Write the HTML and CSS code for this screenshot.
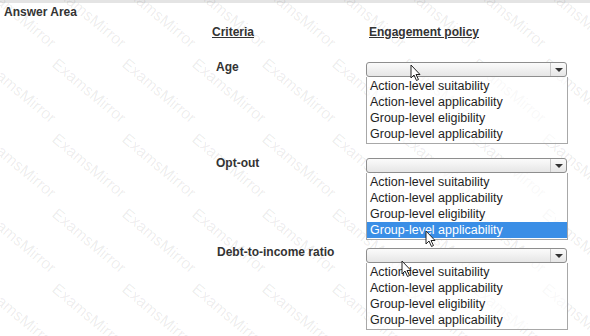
FILE: index.html
```html
<!DOCTYPE html>
<html>
<head>
<meta charset="utf-8">
<link rel="stylesheet" href="styles.css">
</head>
<body>
<div class="page">
  <div class="topband"></div>
  <div class="title">Answer Area</div>
  <div class="table">
    <div class="head">Criteria</div>
    <div class="head">Engagement policy</div>

    <div class="label row1">Age</div>
    <div class="field row1">
      <div class="select"><span class="arrow"></span></div>
      <ul class="list">
        <li>Action-level suitability</li>
        <li>Action-level applicability</li>
        <li>Group-level eligibility</li>
        <li>Group-level applicability</li>
      </ul>
    </div>

    <div class="label row2">Opt-out</div>
    <div class="field row2">
      <div class="select"><span class="arrow"></span></div>
      <ul class="list">
        <li>Action-level suitability</li>
        <li>Action-level applicability</li>
        <li>Group-level eligibility</li>
        <li class="sel">Group-level applicability</li>
      </ul>
    </div>

    <div class="label row3">Debt-to-income ratio</div>
    <div class="field row3">
      <div class="select"><span class="arrow"></span></div>
      <ul class="list">
        <li>Action-level suitability</li>
        <li>Action-level applicability</li>
        <li>Group-level eligibility</li>
        <li>Group-level applicability</li>
      </ul>
    </div>
  </div>

  <div class="watermarks">
    <span>ExamsMirror</span><span>ExamsMirror</span><span>ExamsMirror</span><span>ExamsMirror</span><span>ExamsMirror</span><span>ExamsMirror</span><span>ExamsMirror</span><span>ExamsMirror</span><span>ExamsMirror</span>
    <span>ExamsMirror</span><span>ExamsMirror</span><span>ExamsMirror</span><span>ExamsMirror</span><span>ExamsMirror</span><span>ExamsMirror</span><span>ExamsMirror</span><span>ExamsMirror</span><span>ExamsMirror</span>
    <span>ExamsMirror</span><span>ExamsMirror</span><span>ExamsMirror</span><span>ExamsMirror</span><span>ExamsMirror</span><span>ExamsMirror</span><span>ExamsMirror</span><span>ExamsMirror</span><span>ExamsMirror</span>
    <span>ExamsMirror</span><span>ExamsMirror</span><span>ExamsMirror</span><span>ExamsMirror</span><span>ExamsMirror</span><span>ExamsMirror</span><span>ExamsMirror</span><span>ExamsMirror</span><span>ExamsMirror</span>
    <span>ExamsMirror</span><span>ExamsMirror</span><span>ExamsMirror</span><span>ExamsMirror</span><span>ExamsMirror</span><span>ExamsMirror</span><span>ExamsMirror</span><span>ExamsMirror</span><span>ExamsMirror</span>
  </div>

  <svg class="cursor c1" width="12" height="18" viewBox="0 0 12 18"><path d="M1 1 L1 14 L4 11 L6.5 16.5 L8.5 15.5 L6 10.5 L10 10.5 Z" fill="#fff" stroke="#222" stroke-width="1"/></svg>
  <svg class="cursor c2" width="12" height="18" viewBox="0 0 12 18"><path d="M1 1 L1 14 L4 11 L6.5 16.5 L8.5 15.5 L6 10.5 L10 10.5 Z" fill="#fff" stroke="#222" stroke-width="1"/></svg>
  <svg class="cursor c3" width="12" height="18" viewBox="0 0 12 18"><path d="M1 1 L1 14 L4 11 L6.5 16.5 L8.5 15.5 L6 10.5 L10 10.5 Z" fill="#fff" stroke="#222" stroke-width="1"/></svg>
</div>
</body>
</html>
```

FILE: styles.css
```css
html, body {
  margin: 0;
  padding: 0;
  background: #fff;
}
.page {
  position: relative;
  width: 590px;
  height: 336px;
  overflow: hidden;
  font-family: "Liberation Sans", Arial, sans-serif;
  color: #222;
}
.topband {
  height: 3px;
  background: #e4e4e4;
}
.title {
  font-size: 12px;
  font-weight: bold;
  color: #333;
  padding: 2px 0 0 4px;
  line-height: 14px;
  position: relative;
  z-index: 2;
}
.table {
  display: grid;
  grid-template-columns: 154px 204px;
  margin-left: 212px;
  margin-top: 7px;
  position: relative;
  z-index: 2;
}
.head {
  font-size: 12px;
  font-weight: bold;
  text-decoration: underline;
  color: #333;
  line-height: 13px;
}
.head + .head {
  padding-left: 3px;
}
.label {
  font-size: 12px;
  font-weight: bold;
  color: #333;
  padding-left: 4px;
  line-height: 13px;
}
.row1 { margin-top: 23px; }
.label.row1 { margin-top: 22px; }
.row2 { margin-top: 14px; }
.label.row2 { margin-top: 13px; }
.row3 { margin-top: 8px; }
.label.row3 { margin-top: 6px; padding-left: 5px; }
.field {
  display: flex;
  flex-direction: column;
  width: 202px;
}
.select {
  height: 13px;
  border: 1px solid #8e8e8e;
  border-radius: 3px;
  background: linear-gradient(#fbfbfb, #e6e6e6);
  position: relative;
  margin-right: 1px;
}
.arrow {
  position: absolute;
  right: 0;
  top: 0;
  bottom: 0;
  width: 15px;
  border-left: 1px solid #c8c8c8;
}
.arrow::after {
  content: "";
  position: absolute;
  left: 4px;
  top: 5px;
  border-left: 4px solid transparent;
  border-right: 4px solid transparent;
  border-top: 4px solid #333;
}
.list {
  list-style: none;
  margin: 0;
  padding: 1px 0 1px;
  border: 1px solid #a8a8a8;
  border-top: none;
  background: rgba(255,255,255,0.6);
}
.list li {
  font-size: 12.5px;
  line-height: 16px;
  height: 16px;
  padding-left: 3px;
  color: #1e1e1e;
  white-space: nowrap;
}
.list li.sel {
  background: #3a8ee6;
  color: #fff;
}
.watermarks {
  position: absolute;
  left: -30px;
  top: -20px;
  display: grid;
  grid-template-columns: repeat(9, 70px);
  grid-auto-rows: 75px;
  z-index: 1;
  pointer-events: none;
}
.watermarks span {
  display: block;
  font-family: "Liberation Sans", Arial, sans-serif;
  font-size: 16px;
  color: rgba(0,0,0,0.08);
  transform: rotate(40deg);
  transform-origin: 0 0;
  white-space: nowrap;
  margin-left: 20px;
}
.cursor {
  position: absolute;
  z-index: 3;
}
.c1 { left: 410px; top: 64px; }
.c2 { left: 425px; top: 230px; }
.c3 { left: 401px; top: 260px; }
```
